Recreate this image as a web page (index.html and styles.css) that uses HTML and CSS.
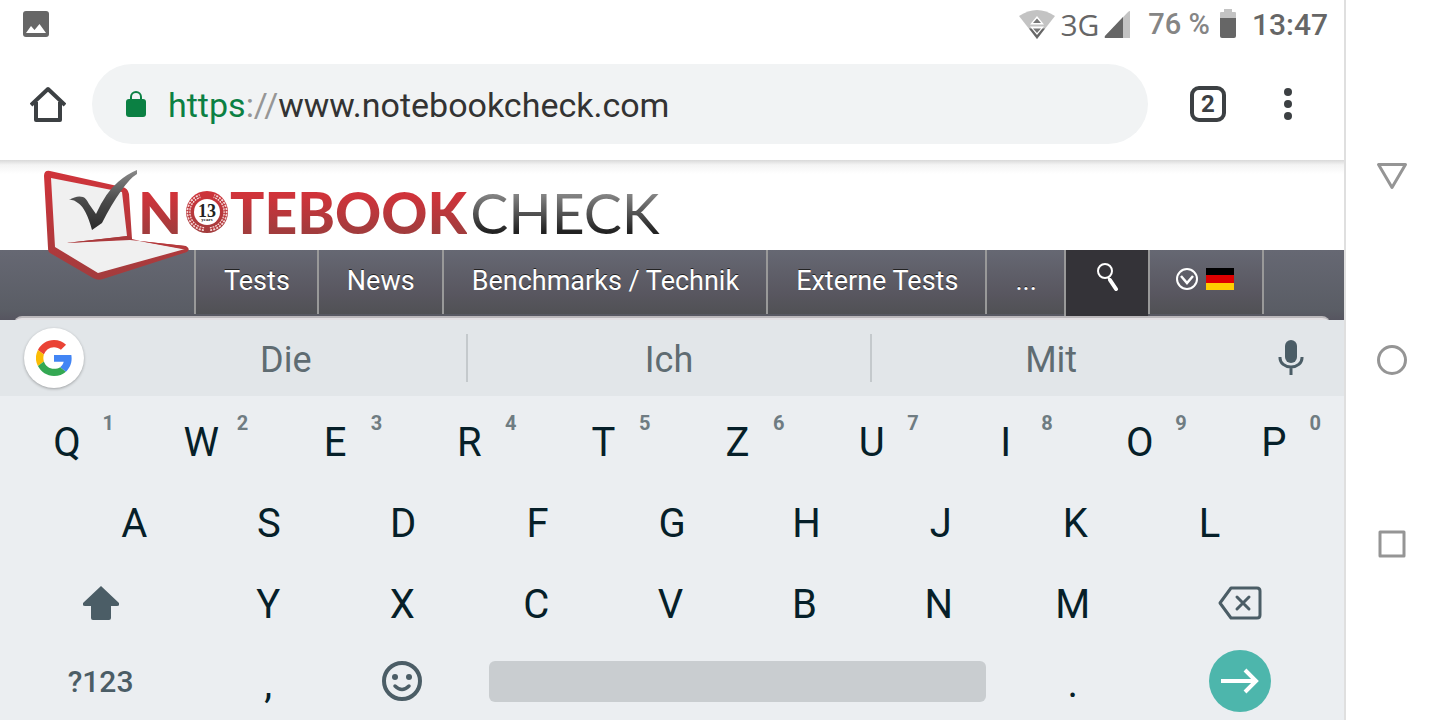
FILE: index.html
```html
<!DOCTYPE html>
<html lang="de">
  <head>
    <meta charset="utf-8">
    <title>Notebookcheck</title>
    <link rel="stylesheet" href="styles.css">
  </head>
  <body>
    <div class="screen">

      <div class="status">
        <svg class="status-image" width="26" height="26" viewBox="0 0 26 26">
          <rect width="26" height="26" rx="3" fill="#666"/>
          <path d="M3 22l5-7 3.500 4L16.500 13 23 22z" fill="#fff"/>
        </svg>
        <svg width="36" height="29" viewBox="0 0 36 29">
          <path d="M0 6Q18-6 36 6L18 29z" fill="#c3c3c3"/>
          <path d="M10 18.500h16L18 29z" fill="#666"/>
          <path d="M18 6l7 8.500H11zM11 16.500h14L18 25z" fill="#fff"/>
          <path d="M18 8.500l4 4.500h-8zM14 18.500h8L18 23z" fill="#777"/>
        </svg>
        <span class="network">3G</span>
        <svg width="27" height="27" viewBox="0 0 27 27">
          <path d="M26 0v27H2q-2 0-1-2L24 1q1-1 2-1z" fill="#c3c3c3"/>
          <path d="M19 6v21H2q-2 0-1-2z" fill="#666"/>
        </svg>
        <span class="percent">76 %</span>
        <svg width="16" height="30" viewBox="0 0 16 30">
          <path d="M4 0h8v3h3q1 0 1 1v7H0V4q0-1 1-1h3z" fill="#c3c3c3"/>
          <path d="M0 9h16v18q0 2-2 2H2q-2 0-2-2z" fill="#666"/>
        </svg>
        <span class="clock">13:47</span>
      </div>

      <div class="toolbar">
        <button class="tool home" aria-label="Home">
          <svg width="36" height="36" viewBox="0 0 36 36" fill="none" stroke="#3c4043" stroke-width="4" stroke-linejoin="round">
            <path d="M1 19L18 3l17 16M6 16v18h24V16"/>
          </svg>
        </button>
        <div class="address">
          <svg class="lock" width="20" height="26" viewBox="0 0 20 26">
            <rect y="8" width="20" height="18" rx="3" fill="#0b8043"/>
            <path d="M5 9V6a5 5 0 0 1 10 0v3" fill="none" stroke="#0b8043" stroke-width="2"/>
          </svg>
          <label for="url"><span class="scheme">https</span><span class="slashes">://</span></label>
          <input type="text" id="url" value="www.notebookcheck.com">
        </div>
        <button class="tool"><span class="tabs">2</span></button>
        <button class="tool" aria-label="Menu">
          <svg width="8" height="32" viewBox="0 0 8 32" fill="#3c4043">
            <circle cx="4" cy="4" r="4"/><circle cx="4" cy="16" r="4"/><circle cx="4" cy="28" r="4"/>
          </svg>
        </button>
      </div>

      <div class="site">
        <a class="logo" href="#">
          <svg class="laptop" width="160" height="120" viewBox="40 165 160 120">
            <defs>
              <linearGradient id="red" x1="0" y1="0" x2="0" y2="1">
                <stop offset="0" stop-color="#d0333a"/><stop offset="1" stop-color="#a23c3d"/>
              </linearGradient>
              <linearGradient id="dark" x1="0" y1="0" x2="0" y2="1">
                <stop offset="0" stop-color="#8a8a8a"/><stop offset=".5" stop-color="#4b4b4b"/><stop offset="1" stop-color="#2b2b2b"/>
              </linearGradient>
            </defs>
            <path d="M44 176q0-6 6-5L122 187q6 1 7 7L132 239l8 2 46 5q5 3 1 6L103 279q-5 2-10-1L50 253q-2-1-2-5z" fill="url(#red)"/>
            <path d="M51 178L122 192 127 236 66 243l64-3 10 1 45 8L98 273 55 247z" fill="#f0f0f0"/>
            <path d="M66 243l62-7 4 2v1.500L116 240z" fill="#a83a3c"/>
            <path d="M139 241l46 5 3 4-6-1z" fill="#b5393c"/>
            <path d="M69 200q8-5 14-3 3 1 6 7l7 10q10-22 22-32 9-8 19-12v4q-7 4-16 17-10 14-19 32l-10 7q-6-22-14-27-5-4-9-3z" fill="url(#dark)"/>
          </svg>
          <span class="red">N</span>
          <svg class="badge" width="44" height="44" viewBox="0 0 44 44">
            <circle cx="22" cy="22" r="21" fill="url(#red)"/>
            <g fill="none" stroke="#f5d5d5" stroke-width="4" stroke-dasharray="2 1">
              <path d="M19 39A17 17 0 0 1 15 6"/><path d="M25 39A17 17 0 0 0 29 6"/>
            </g>
            <g fill="none" stroke="#bb373b" stroke-width="1">
              <path d="M19 39A17 17 0 0 1 15 6"/><path d="M25 39A17 17 0 0 0 29 6"/>
            </g>
            <circle cx="22" cy="22" r="13" fill="#fff"/>
            <text text-anchor="middle"><tspan class="badge-number" x="22" y="27">13</tspan><tspan class="badge-years" x="22" y="31">years</tspan></text>
          </svg>
          <span class="red">TEBOOK</span><span class="grey">CHECK</span>
        </a>
        <nav class="menu">
          <a href="#">Tests</a>
          <a href="#">News</a>
          <a href="#">Benchmarks / Technik</a>
          <a href="#">Externe Tests</a>
          <a href="#">...</a>
          <a class="search" href="#" aria-label="Suche">
            <svg width="24" height="28" viewBox="0 0 24 28" fill="none" stroke="#fff">
              <circle cx="9" cy="8" r="7" stroke-width="2"/>
              <path d="M12 14l2 3" stroke-width="2"/>
              <path d="M14 17l6 9" stroke-width="4" stroke-linecap="round"/>
            </svg>
          </a>
          <a class="language" href="#" aria-label="Deutsch">
            <svg width="22" height="22" viewBox="0 0 22 22" fill="none" stroke="#fff">
              <circle cx="11" cy="11" r="10" stroke-width="2"/>
              <path d="M5 8l6 7 6-7" stroke-width="2.500"/>
            </svg>
            <span class="flag"></span>
          </a>
        </nav>
        <div class="sheet"></div>
      </div>

      <div class="keyboard">
        <div class="suggestions">
          <button class="google" aria-label="Google">
            <svg width="36" height="36" viewBox="0 0 48 48">
              <path fill="#ea4335" d="M24 9.500c3.540 0 6.710 1.220 9.210 3.600l6.850-6.850C35.900 2.380 30.470 0 24 0 14.620 0 6.510 5.380 2.560 13.220l7.980 6.190C12.430 13.720 17.740 9.500 24 9.500z"/>
              <path fill="#4285f4" d="M47.500 24.550c0-1.570-.15-3.090-.38-4.550H24v9.020h12.940c-.58 2.960-2.260 5.480-4.780 7.180l7.730 6c4.510-4.180 7.610-10.360 7.610-17.650z"/>
              <path fill="#fbbc05" d="M10.530 28.590A14.500 14.500 0 0 1 10.530 19.410l-7.980-6.190a24 24 0 0 0 0 21.560z"/>
              <path fill="#34a853" d="M24 48c6.480 0 11.930-2.130 15.890-5.810l-7.730-6c-2.150 1.450-4.920 2.300-8.160 2.300-6.260 0-11.570-4.220-13.470-9.910l-7.980 6.190C6.510 42.620 14.620 48 24 48z"/>
            </svg>
          </button>
          <div class="words">
            <button>Die</button>
            <button>Ich</button>
            <button>Mit</button>
          </div>
          <button class="mic" aria-label="Spracheingabe">
            <svg width="26" height="36" viewBox="0 0 26 36">
              <rect x="7" y="0" width="12" height="23" rx="6" fill="#4b5d66"/>
              <path d="M2 17v1a11 9 0 0 0 22 0v-1M13 27v8" fill="none" stroke="#4b5d66" stroke-width="3"/>
            </svg>
          </button>
        </div>

        <div class="row">
          <button>Q<sup>1</sup></button>
          <button>W<sup>2</sup></button>
          <button>E<sup>3</sup></button>
          <button>R<sup>4</sup></button>
          <button>T<sup>5</sup></button>
          <button>Z<sup>6</sup></button>
          <button>U<sup>7</sup></button>
          <button>I<sup>8</sup></button>
          <button>O<sup>9</sup></button>
          <button>P<sup>0</sup></button>
        </div>
        <div class="row middle">
          <button>A</button>
          <button>S</button>
          <button>D</button>
          <button>F</button>
          <button>G</button>
          <button>H</button>
          <button>J</button>
          <button>K</button>
          <button>L</button>
        </div>
        <div class="row">
          <button class="wide icon" aria-label="Shift">
            <svg width="36" height="34" viewBox="0 0 36 34">
              <path d="M18 0l18 17q1 3-2 3h-6v12q0 2-2 2H10q-2 0-2-2V20H2q-3 0-2-3z" fill="#4b5d66"/>
            </svg>
          </button>
          <button>Y</button>
          <button>X</button>
          <button>C</button>
          <button>V</button>
          <button>B</button>
          <button>N</button>
          <button>M</button>
          <button class="wide icon" aria-label="Löschen">
            <svg width="44" height="34" viewBox="0 0 44 34" fill="none" stroke="#4b5d66" stroke-linejoin="round" stroke-linecap="round">
              <path d="M13 2h26q3 0 3 3v24q0 3-3 3H13L2 17z" stroke-width="3"/>
              <path d="M19 11l12 12M31 11L19 23" stroke-width="3"/>
            </svg>
          </button>
        </div>
        <div class="row bottom">
          <button class="wide icon symbols">?123</button>
          <button>,</button>
          <button class="icon" aria-label="Emoji">
            <svg width="40" height="40" viewBox="0 0 40 40">
              <circle cx="20" cy="20" r="18" fill="none" stroke="#4b5d66" stroke-width="4"/>
              <circle cx="13" cy="16" r="3" fill="#4b5d66"/>
              <circle cx="27" cy="16" r="3" fill="#4b5d66"/>
              <path d="M13 25q7 7 14 0" fill="none" stroke="#4b5d66" stroke-width="3.500" stroke-linecap="round"/>
            </svg>
          </button>
          <div class="widest icon">
            <button class="space" aria-label="Leertaste"></button>
          </div>
          <button>.</button>
          <div class="wide icon">
            <button class="enter" aria-label="Los">
              <svg width="38" height="26" viewBox="0 0 38 26" fill="none" stroke="#fff" stroke-width="4">
                <path d="M0 13h34M24 2l11 11-11 11"/>
              </svg>
            </button>
          </div>
        </div>
      </div>
    </div>

    <div class="system">
      <button aria-label="Zurück">
        <svg width="32" height="32" viewBox="0 0 32 32"><path d="M2.500 4.500h27L16 27.500z"/></svg>
      </button>
      <button aria-label="Startbildschirm">
        <svg width="32" height="32" viewBox="0 0 32 32"><circle cx="16" cy="16" r="13.500"/></svg>
      </button>
      <button aria-label="Letzte Apps">
        <svg width="32" height="32" viewBox="0 0 32 32"><path d="M4 4h24v24H4z"/></svg>
      </button>
    </div>
  </body>
</html>
```
FILE: styles.css
```css
body{
  margin: 0;
  display: flex;
  min-height: 100vh;
  font-family: Roboto, sans-serif;
  background-color: #fff;
}

button{
  border: 0;
  padding: 0;
  margin: 0;
  background: none;
  font-family: inherit;
  color: inherit;
}

svg{
  display: block;
  flex: none;
}

.screen{
  flex: 1;
  min-width: 0;
}

/* status bar */
.status{
  display: flex;
  align-items: center;
  height: 48px;
  padding: 0 16px 0 23px;
  font-size: 30px;
  font-weight: 500;
  color: #666;
}

.status-image{
  margin-right: auto;
}

.network{
  font-family: "Open Sans", sans-serif;
  font-size: 30px;
  font-weight: 400;
  margin: 0 5px;
}

.percent{
  color: #858585;
  font-size: 29px;
  margin: 0 10px 0 17px;
}

.clock{
  margin-left: 16px;
}

/* browser toolbar */
.toolbar{
  display: flex;
  align-items: center;
  height: 112px;
  padding-right: 16px;
}

.tool{
  display: flex;
  align-items: center;
  justify-content: center;
  width: 80px;
  height: 80px;
  color: #3c4043;
}

.home{
  margin: 0 4px 0 8px;
}

.tabs{
  box-sizing: border-box;
  width: 36px;
  height: 36px;
  border: 4px solid #3c4043;
  border-radius: 9px;
  font-size: 24px;
  font-weight: 700;
  line-height: 29px;
}

.address{
  display: flex;
  flex: 1;
  align-items: center;
  height: 80px;
  margin-right: 20px;
  padding: 0 34px;
  box-sizing: border-box;
  border-radius: 40px;
  background-color: #f1f3f4;
  font-size: 34px;
}

.address label, .address input{
  padding: 2px 0 0;
}

.lock{
  margin-right: 22px;
}

.scheme{
  color: #0b8043;
}

.slashes{
  color: #969696;
}

.address input{
  flex: 1;
  min-width: 0;
  border: 0;
  outline: 0;
  background: none;
  font: inherit;
  color: #333;
}

/* web page */
.site{
  position: relative;
  background: linear-gradient(#d9d9d9, #f4f4f4 5px, #fff 14px);
}

.logo{
  display: flex;
  align-items: center;
  height: 90px;
  padding: 14px 0 0 138px;
  box-sizing: border-box;
  font-family: Lato, sans-serif;
  font-size: 57px;
  line-height: 56px;
  text-decoration: none;
}

.laptop{
  position: absolute;
  left: 40px;
  top: 5px;
  z-index: 1;
}

.red, .grey{
  color: transparent;
  -webkit-background-clip: text;
  background-clip: text;
}

.red{
  font-weight: 900;
  background-image: linear-gradient(#d0333a 20%, #a23c3d 85%);
}

.grey{
  margin-left: 3px;
  background-image: linear-gradient(#8a8a8a 15%, #222 85%);
}

.badge{
  margin: 0 1px 0 3px;
}

.badge-number{
  font: bold 18px "Liberation Serif", serif;
  fill: #222;
}

.badge-years{
  font: bold 5px "Liberation Serif", serif;
  fill: #222;
}

.menu{
  display: flex;
  height: 70px;
  padding-left: 194px;
  background: linear-gradient(#666873, #5a5d65 60px, #565560);
}

.menu a{
  display: flex;
  align-items: center;
  height: 64px;
  padding: 0 27px 2px 28px;
  box-sizing: border-box;
  border-left: 2px solid #999;
  background: linear-gradient(#666873, #58565f 45px, #505154);
  font-size: 27px;
  color: #fff;
  text-decoration: none;
  text-shadow: 0 -1px 0 #222;
  white-space: nowrap;
}

.menu .search{
  height: 66px;
  padding: 0 28px 12px 30px;
  background: #343338;
}

.menu .language{
  gap: 8px;
  padding: 0 28px 6px 26px;
  border-right: 2px solid #999;
}

.flag{
  width: 28px;
  height: 22px;
  background: linear-gradient(#000 33%, #d00 33%, #d00 67%, #ffce00 67%);
}

/* rounded top of the content below the menu, the keyboard covers the rest */
.sheet{
  position: absolute;
  left: 14px;
  right: 14px;
  bottom: -12px;
  height: 16px;
  box-sizing: border-box;
  border-top: 2px solid #bbb8bb;
  border-radius: 8px 8px 0 0;
  background-color: #e3e0e3;
}

/* keyboard */
.keyboard{
  position: relative;
  background-color: #ebeef1;
  color: #061f29;
}

.suggestions{
  display: flex;
  align-items: center;
  height: 76px;
  margin-bottom: 5px;
  padding: 0 40px 0 24px;
  background-color: #e2e6e9;
}

.google{
  display: flex;
  align-items: center;
  justify-content: center;
  width: 60px;
  height: 60px;
  border-radius: 50%;
  background-color: #fff;
  box-shadow: 0 1px 3px rgba(0, 0, 0, 0.3);
}

.words{
  display: grid;
  flex: 1;
  grid-template-columns: 8fr 9fr 8fr;
  margin: 0 48px 0 22px;
}

.words button{
  height: 48px;
  padding-top: 3px;
  font-size: 36px;
  color: #5f6c72;
}

.words button + button{
  border-left: 2px solid #c4c9cc;
}

.row{
  display: flex;
  height: 81px;
  padding-right: 3px;
}

.row > *{
  display: flex;
  position: relative;
  flex: 2 1 0;
  align-items: center;
  justify-content: center;
  box-sizing: border-box;
  padding-top: 2px;
  font-size: 40px;
}

.row > .icon{
  padding: 0 0 2px;
}

.row > .wide{
  flex-grow: 3;
}

.row > .widest{
  flex-grow: 8;
}

.middle{
  padding: 0 5%;
}

.row sup{
  position: absolute;
  top: 10px;
  right: 20px;
  font-size: 20px;
  font-weight: 700;
  line-height: 24px;
  color: #6f7c82;
}

.bottom{
  height: 76px;
}

.bottom .symbols{
  font-size: 30px;
  font-weight: 500;
  color: #4b5d66;
}

.space{
  flex: 1;
  height: 41px;
  margin: 0 20px;
  border-radius: 6px;
  background-color: #c9cdd0;
}

.enter{
  display: flex;
  align-items: center;
  justify-content: center;
  width: 62px;
  height: 62px;
  border-radius: 50%;
  background-color: #4db6ac;
}

/* android buttons */
.system{
  display: flex;
  flex-direction: column;
  align-items: center;
  justify-content: center;
  gap: 152px;
  width: 92px;
  padding-right: 2px;
  border-left: 2px solid #dfdfdf;
}

.system svg{
  fill: none;
  stroke: #959595;
  stroke-width: 3;
  stroke-linejoin: round;
}
```
